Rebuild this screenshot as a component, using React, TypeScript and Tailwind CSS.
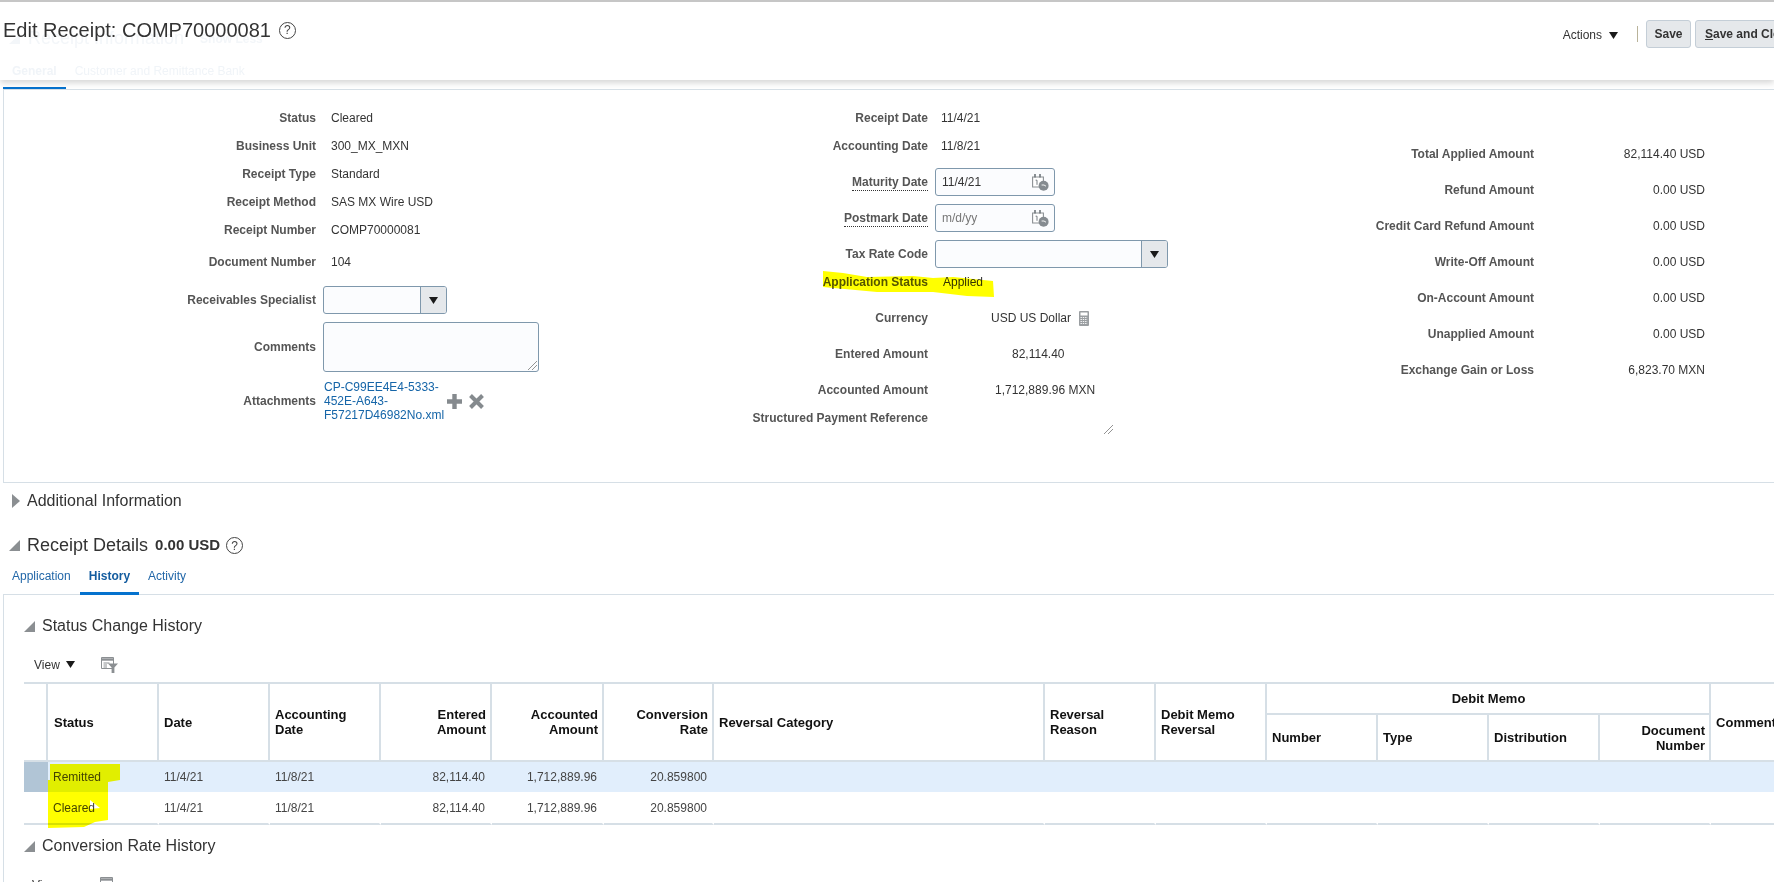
import React from "react";

const Tri = ({ className = "" }: { className?: string }) => (
  <svg width="12" height="11" viewBox="0 0 12 11" className={"shrink-0 " + className}>
    <polygon points="11,0 11,11 0,11" fill="#8b8f92" />
  </svg>
);
const TriRight = () => (
  <svg width="9" height="14" viewBox="0 0 9 14" className="shrink-0">
    <polygon points="0,0 8,7 0,14" fill="#8b8f92" />
  </svg>
);
const Down = ({ className = "" }: { className?: string }) => (
  <svg width="9" height="7" viewBox="0 0 9 7" className={"shrink-0 " + className}>
    <polygon points="0,0 9,0 4.5,7" fill="#1a1a1a" />
  </svg>
);
const Help = () => (
  <span className="flex h-[17px] w-[17px] shrink-0 items-center justify-center rounded-full border border-[#444] text-[12px] font-normal text-[#444]">
    ?
  </span>
);
const Calendar = () => (
  <svg width="17" height="17" viewBox="0 0 17 17" className="shrink-0">
    <path d="M.6 3h10.8v10H.6z" fill="#fff" stroke="#8b9094" strokeWidth="1.1" />
    <path d="M3 0v3.5M8 0v3.5" stroke="#6f767b" strokeWidth="1.6" />
    <path d="M3.6 6.2h1.4v4.6" fill="none" stroke="#777d82" strokeWidth="1" />
    <circle cx="11.6" cy="11.8" r="5" fill="#858b90" />
    <path d="M9.6 11h2.4l2 1.2" fill="none" stroke="#fff" strokeWidth="0.9" />
  </svg>
);
const Calc = () => (
  <svg width="10" height="15" viewBox="0 0 10 15" className="shrink-0">
    <rect width="10" height="15" rx="1" fill="#9a9ea1" />
    <rect x="1.5" y="1.5" width="7" height="3" fill="#fff" />
    <path d="M1.5 6.5h7M1.5 8.5h7M1.5 10.5h7M1.5 12.5h7" stroke="#fff" strokeWidth="0.9" strokeDasharray="1.4 0.9" />
  </svg>
);
const QbeIcon = () => (
  <svg width="17" height="16" viewBox="0 0 17 16" className="shrink-0">
    <path d="M.5.5h12v11H.5z" fill="#fff" stroke="#8b8f92" />
    <path d="M.5 2.5h12" stroke="#8b8f92" strokeWidth="2.4" />
    <path d="M2.5 6h6M2.5 8h3.5M2.5 10h3.5" stroke="#8b8f92" />
    <polygon points="7,6.5 17,6.5 13.4,10.5 13.4,16 10.6,16 10.6,10.5" fill="#8b8f92" />
  </svg>
);
const Resize = () => (
  <svg width="9" height="9" viewBox="0 0 9 9">
    <path d="M0 9 9 0M4 9l5-5" stroke="#777" strokeWidth="0.8" />
  </svg>
);

const Row = ({ label, w, h = "h-[28px]", children, dotted = false }: { label: string; w: string; h?: string; children?: React.ReactNode; dotted?: boolean }) => (
  <div className={"flex items-center " + h}>
    <div className={"shrink-0 text-right font-bold text-[#555] " + w}>
      <span className={dotted ? "border-b border-dotted border-[#333] pb-[1px]" : ""}>{label}</span>
    </div>
    {children}
  </div>
);

const Combo = ({ w }: { w: string }) => (
  <div className={"ml-[7px] flex h-[28px] overflow-hidden rounded-[3px] border border-[#7f98ac] bg-[#fbfcfe] " + w}>
    <div className="flex-1" />
    <div className="flex w-[26px] items-center justify-center border-l border-[#7f98ac] bg-[#e5e8eb]">
      <Down />
    </div>
  </div>
);

const DateBox = ({ value, placeholder = false }: { value: string; placeholder?: boolean }) => (
  <div className="ml-[7px] flex h-[28px] w-[120px] items-center justify-between rounded-[3px] border border-[#7f98ac] bg-[#fbfcfe] pl-[6px] pr-[5px]">
    <span className={placeholder ? "text-[#777]" : "text-[#333]"}>{value}</span>
    <Calendar />
  </div>
);

const col1 = ["Status:Cleared", "Business Unit:300_MX_MXN", "Receipt Type:Standard", "Receipt Method:SAS MX Wire USD", "Receipt Number:COMP70000081"];
const summary = [
  ["Total Applied Amount", "82,114.40 USD"],
  ["Refund Amount", "0.00 USD"],
  ["Credit Card Refund Amount", "0.00 USD"],
  ["Write-Off Amount", "0.00 USD"],
  ["On-Account Amount", "0.00 USD"],
  ["Unapplied Amount", "0.00 USD"],
  ["Exchange Gain or Loss", "6,823.70 MXN"],
];

const thBase = "border-b-2 border-r-2 border-[#d6dfe6] pl-[5px] pr-[4px] align-middle text-[13px] leading-[15px] font-bold text-[#111]";
const th = thBase + " border-t-2";
const td = "border-r-2 pl-[5px] pr-[5px] text-[#444]";

const DataRow = ({ status, selected }: { status: string; selected?: boolean }) => {
  const line = selected ? "border-[#e1eefc]" : "border-white";
  const cls = td + " " + line;
  return (
    <tr className={selected ? "h-[30px] bg-[#e1eefc]" : "h-[33px] bg-white [&>td]:border-b-2 [&>td]:border-b-[#d6dfe6]"}>
      <td className={selected ? "bg-[#b1c5d6]" : ""} />
      <td className={cls}>{status}</td>
      <td className={cls}>11/4/21</td>
      <td className={cls}>11/8/21</td>
      <td className={cls + " text-right"}>82,114.40</td>
      <td className={cls + " text-right"}>1,712,889.96</td>
      <td className={cls + " text-right"}>20.859800</td>
      <td className={cls} />
      <td className={cls} />
      <td className={cls} />
      <td className={cls} />
      <td className={cls} />
      <td className={cls} />
      <td className={cls} />
      <td className={cls} />
    </tr>
  );
};

export default function App() {
  return (
    <div className="relative h-[882px] w-[1774px] overflow-hidden bg-white font-['Liberation_Sans',Arial,sans-serif] text-[12px] text-[#333]">
      {/* header */}
      <header className="relative z-10 flex h-[80px] items-start border-t-2 border-[#c6c6c6] bg-white shadow-[0_3px_6px_rgba(0,0,0,0.16)]">
        <div className="absolute left-[9px] top-[23px] flex items-center gap-[8px] text-[#f3f6f9]">
          <svg width="11" height="10"><polygon points="11,0 11,10 0,10" fill="#f3f6f9" /></svg>
          <span className="text-[18px]">Receipt Information</span>
          <span className="ml-[8px] text-[12px] font-bold">Show Less</span>
        </div>
        <div className="absolute left-[12px] top-[60px] flex gap-[18px] text-[12px] text-[#f0f4f8]">
          <span className="font-bold">General</span>
          <span>Customer and Remittance Bank</span>
        </div>
        <div className="relative flex h-[56px] flex-1 items-center pl-[3px]">
          <h1 className="text-[20px] font-normal text-[#333]">Edit Receipt: COMP70000081</h1>
          <span className="ml-[8px]"><Help /></span>
        </div>
        <div className="relative flex items-center pt-[18px]">
          <span className="ml-[1px] mt-[2px] text-[#333]">Actions</span>
          <Down className="ml-[7px] mt-[3px]" />
          <span className="ml-[19px] h-[16px] w-px bg-[#b9b39a]" />
          <button className="ml-[8px] h-[28px] w-[45px] rounded-[3px] border border-[#c4ced7] bg-[#e5e8eb] font-bold text-[#333]">Save</button>
          <button className="ml-[4px] h-[28px] w-[96px] rounded-[3px] border border-[#c4ced7] bg-[#e5e8eb] pl-[9px] text-left font-bold whitespace-nowrap text-[#333] -mr-[17px]">
            <span className="underline">S</span>ave and Close
          </button>
        </div>
      </header>

      {/* general tab marker */}
      <div className="ml-[3px] mt-[7px] h-[3px] w-[63px] bg-[#0572ce]" />

      {/* form panel */}
      <section className="-mt-px ml-[3px] flex h-[394px] border-b border-l border-t border-[#d6dfe6]">
        <div className="w-[536px] shrink-0 pt-[14px]">
          {col1.map((r) => {
            const [l, v] = r.split(":");
            return (
              <Row key={l} label={l} w="w-[312px]">
                <span className="ml-[15px]">{v}</span>
              </Row>
            );
          })}
          <Row label="Document Number" w="w-[312px]" h="h-[36px]">
            <span className="ml-[15px]">104</span>
          </Row>
          <div className="mt-[6px]">
            <Row label="Receivables Specialist" w="w-[312px]">
              <Combo w="w-[124px]" />
            </Row>
          </div>
          <div className="mt-[8px]">
            <Row label="Comments" w="w-[312px]" h="h-[50px]">
              <div className="ml-[7px] flex h-[50px] w-[216px] items-end justify-end rounded-[3px] border border-[#7f98ac] bg-[#fbfcfe] p-[1px]">
                <Resize />
              </div>
            </Row>
          </div>
          <div className="mt-[8px]">
            <Row label="Attachments" w="w-[312px]" h="h-[42px]">
              <div className="ml-[8px] w-[124px] leading-[14px] text-[#1565a8]">
                CP-C99EE4E4-5333-
                <br />
                452E-A643-
                <br />
                F57217D46982No.xml
              </div>
              <svg width="15" height="15" viewBox="0 0 15 15" className="ml-[-1px]">
                <path d="M7.5 0v15M0 7.5h15" stroke="#858a8e" strokeWidth="4.4" />
              </svg>
              <svg width="15" height="15" viewBox="0 0 15 15" className="ml-[7px]">
                <path d="M1.5 1.5l12 12M13.5 1.5l-12 12" stroke="#858a8e" strokeWidth="4" />
              </svg>
            </Row>
          </div>
        </div>

        <div className="w-[660px] shrink-0 pt-[14px]">
          <Row label="Receipt Date" w="w-[388px]"><span className="ml-[13px]">11/4/21</span></Row>
          <Row label="Accounting Date" w="w-[388px]"><span className="ml-[13px]">11/8/21</span></Row>
          <div className="mt-[8px]">
            <Row label="Maturity Date" w="w-[388px]" dotted><DateBox value="11/4/21" /></Row>
          </div>
          <div className="mt-[8px]">
            <Row label="Postmark Date" w="w-[388px]" dotted><DateBox value="m/d/yy" placeholder /></Row>
          </div>
          <div className="mt-[8px]">
            <Row label="Tax Rate Code" w="w-[388px]"><Combo w="w-[233px]" /></Row>
          </div>
          <Row label="Application Status" w="w-[388px]"><span className="ml-[15px]">Applied</span></Row>
          <div className="mt-[8px]">
            <Row label="Currency" w="w-[388px]">
              <span className="ml-[63px]">USD US Dollar</span>
              <span className="ml-[8px]"><Calc /></span>
            </Row>
          </div>
          <div className="mt-[8px]">
            <Row label="Entered Amount" w="w-[388px]"><span className="ml-[84px]">82,114.40</span></Row>
          </div>
          <div className="mt-[8px]">
            <Row label="Accounted Amount" w="w-[388px]"><span className="ml-[67px]">1,712,889.96 MXN</span></Row>
          </div>
          <Row label="Structured Payment Reference" w="w-[388px]">
            <span className="ml-[176px] mt-[22px]"><Resize /></span>
          </Row>
        </div>

        <div className="flex-1 pt-[46px]">
          {summary.map(([l, v]) => (
            <div key={l} className="flex h-[36px] items-center">
              <div className="w-[334px] shrink-0 text-right font-bold text-[#555]">{l}</div>
              <div className="w-[171px] shrink-0 text-right">{v}</div>
            </div>
          ))}
        </div>
      </section>

      {/* additional information */}
      <div className="flex h-[36px] items-center pl-[12px] text-[16px]">
        <TriRight />
        <span className="ml-[6px]">Additional Information</span>
      </div>

      {/* receipt details */}
      <div className="mt-[8px] flex h-[36px] items-center pl-[9px]">
        <Tri />
        <span className="ml-[6px] text-[18px]">Receipt Details</span>
        <span className="ml-[7px] text-[15px] font-bold">0.00 USD</span>
        <span className="ml-[6px] mt-[1px]"><Help /></span>
      </div>

      {/* tabs */}
      <nav className="flex h-[33px] items-start pl-[3px] text-[#2267a8]">
        <span className="h-[32px] w-[77px] pl-[9px] pt-[4px]">Application</span>
        <span className="h-[32px] w-[59px] border-b-[3px] border-[#0572ce] pt-[4px] text-center font-bold text-[#135c9f]">History</span>
        <span className="ml-[9px] h-[32px] pt-[4px]">Activity</span>
      </nav>

      {/* details panel */}
      <section className="-mt-[2px] ml-[3px] border-l border-t border-[#d6dfe6]">
        <div className="flex h-[60px] items-center pl-[20px] pt-[2px] text-[16px]">
          <Tri />
          <span className="ml-[6px]">Status Change History</span>
        </div>
        <div className="flex h-[27px] items-start pl-[30px] pt-[1px]">
          <span className="text-[#333]">View</span>
          <Down className="ml-[6px] mt-[5px]" />
          <span className="ml-[26px] mt-[1px]"><QbeIcon /></span>
        </div>

        <div className="ml-[20px] w-[1900px]">
          <table className="w-full table-fixed border-separate border-spacing-0 text-[12px]">
            <colgroup>
              <col className="w-[24px]" />
              <col className="w-[111px]" />
              <col className="w-[111px]" />
              <col className="w-[111px]" />
              <col className="w-[111px]" />
              <col className="w-[112px]" />
              <col className="w-[110px]" />
              <col className="w-[331px]" />
              <col className="w-[111px]" />
              <col className="w-[111px]" />
              <col className="w-[111px]" />
              <col className="w-[111px]" />
              <col className="w-[111px]" />
              <col className="w-[111px]" />
              <col />
            </colgroup>
            <thead>
              <tr className="h-[33px]">
                <th rowSpan={2} className="border-b-2 border-r-2 border-t-2 border-[#d6dfe6]" />
                <th rowSpan={2} className={th + " text-left"}><span className="ml-[1px]">Status</span></th>
                <th rowSpan={2} className={th + " text-left"}>Date</th>
                <th rowSpan={2} className={th + " text-left"}>Accounting<br />Date</th>
                <th rowSpan={2} className={th + " text-right"}>Entered<br />Amount</th>
                <th rowSpan={2} className={th + " text-right"}>Accounted<br />Amount</th>
                <th rowSpan={2} className={th + " text-right"}>Conversion<br />Rate</th>
                <th rowSpan={2} className={th + " text-left"}>Reversal Category</th>
                <th rowSpan={2} className={th + " text-left"}>Reversal<br />Reason</th>
                <th rowSpan={2} className={th + " text-left"}>Debit Memo<br />Reversal</th>
                <th colSpan={4} className={th + " text-center"}>Debit Memo</th>
                <th rowSpan={2} className={th + " text-left"}>Comments</th>
              </tr>
              <tr className="h-[47px]">
                <th className={thBase + " text-left"}>Number</th>
                <th className={thBase + " text-left"}>Type</th>
                <th className={thBase + " text-left"}>Distribution</th>
                <th className={thBase + " text-right"}>Document<br />Number</th>
              </tr>
            </thead>
            <tbody>
              <DataRow status="Remitted" selected />
              <DataRow status="Cleared" />
            </tbody>
          </table>
        </div>

        <div className="flex h-[42px] items-center pl-[20px] text-[16px]">
          <Tri />
          <span className="ml-[6px]">Conversion Rate History</span>
        </div>
        <div className="flex items-start pl-[28px] pt-[9px]">
          <span>View</span>
          <span className="ml-[42px] mt-[1px]"><QbeIcon /></span>
        </div>
      </section>

      {/* highlighter marks */}
      <svg className="pointer-events-none absolute inset-0 z-20 mix-blend-multiply" width="1774" height="882" viewBox="0 0 1774 882">
        <polygon fill="#ffff00" points="823,271 843,273 867,277 913,276 933,278 953,277 993,281 994,297 967,296 933,292 877,292 823,287" />
        <path fill="#ffff00" fillRule="evenodd" d="M50 764H120V780L108 782V820L95 822L84 827L48 828V780H50Z M90 800L100 808L90 809Z" />
      </svg>
    </div>
  );
}
